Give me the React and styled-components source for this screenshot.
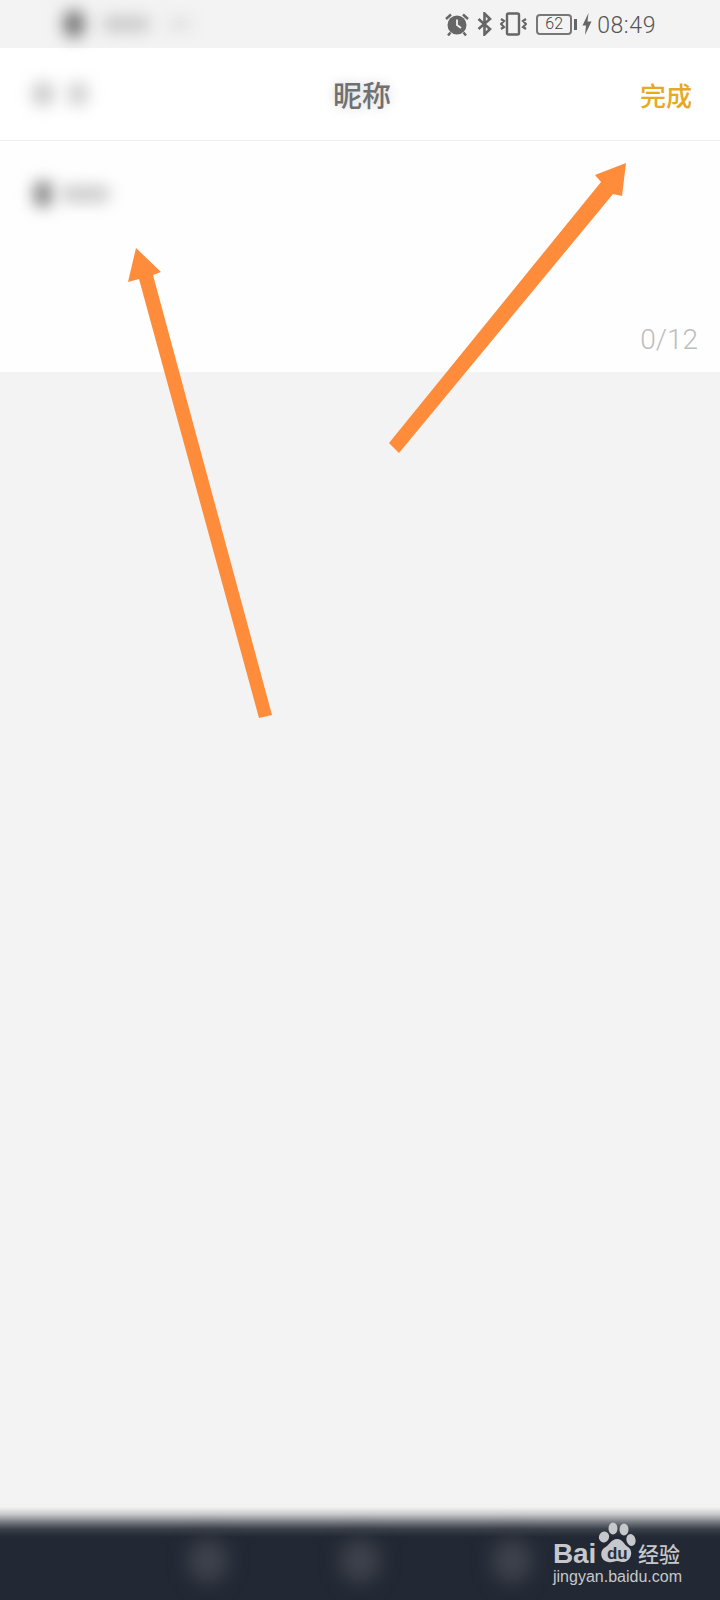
import React from 'react';
import styled, { createGlobalStyle } from 'styled-components';

const GlobalStyle = createGlobalStyle`
  html, body { margin: 0; padding: 0; background: #f3f3f3; }
  body { font-family: 'Noto Sans', 'Noto Sans CJK SC', sans-serif; }
`;

const Page = styled.div`
  position: relative;
  width: 720px;
  height: 1600px;
  display: flex;
  flex-direction: column;
  overflow: hidden;
  background: #f3f3f3;
`;

const StatusBar = styled.div`
  height: 48px;
  flex: none;
  display: flex;
  align-items: center;
  justify-content: space-between;
  padding: 0 64px 0 64px;
  box-sizing: border-box;
  color: #666;
`;

const StatusRight = styled.div`
  display: flex;
  align-items: center;
`;

const Time = styled.span`
  font-family: 'Roboto', sans-serif;
  font-size: 23px;
  line-height: 48px;
  font-weight: 300;
  letter-spacing: 0.6px;
  margin-left: 5px;
  padding-top: 3px;
  color: #555;
`;

const Battery = styled.div`
  width: 36px;
  height: 21px;
  margin: 0 2px 0 9px;
  box-sizing: border-box;
  border: 2px solid #777;
  border-radius: 4px;
  display: flex;
  align-items: center;
  justify-content: center;
  font-family: 'Roboto', sans-serif;
  font-size: 16px;
  font-weight: 300;
  line-height: 1;
  color: #444;
`;

const BatteryNub = styled.div`
  width: 3px;
  height: 11px;
  margin-right: 5px;
  background: #666;
`;

const Smudges = styled.div`
  display: flex;
  align-items: center;
  gap: ${p => p.$gap || 10}px;
`;

const Smudge = styled.div`
  width: ${p => p.$w}px;
  height: ${p => p.$h || 18}px;
  background: ${p => p.$color};
  border-radius: 8px;
  filter: blur(${p => p.$blur || 8}px);
`;

const Header = styled.div`
  height: 93px;
  flex: none;
  display: grid;
  grid-template-columns: 1fr auto 1fr;
  align-items: center;
  padding: 0 28px 0 32px;
  box-sizing: border-box;
  background: #fff;
  border-bottom: 1px solid #efefef;
`;

const Title = styled.h1`
  margin: 0;
  font-family: 'Noto Sans CJK SC', sans-serif;
  font-size: 29px;
  font-weight: 500;
  color: #707070;
  text-shadow: 0 0 12px rgba(0, 0, 0, 0.18);
`;

const DoneButton = styled.button`
  justify-self: end;
  border: 0;
  padding: 0;
  background: none;
  font-family: 'Noto Sans CJK SC', sans-serif;
  font-size: 26px;
  font-weight: 500;
  color: #e6a91f;
`;

const InputPanel = styled.div`
  height: 231px;
  flex: none;
  display: flex;
  flex-direction: column;
  justify-content: space-between;
  padding: 40px 22px 14px 34px;
  box-sizing: border-box;
  background: #fefefe;
`;

const Counter = styled.div`
  align-self: flex-end;
  font-family: 'Roboto', sans-serif;
  font-size: 28px;
  font-weight: 300;
  line-height: 36px;
  color: #bdbdbd;
`;

const Spacer = styled.div`
  flex: 1;
`;

const NavBar = styled.div`
  position: relative;
  height: 93px;
  flex: none;
  display: flex;
  justify-content: center;
  align-items: center;
  gap: 112px;
  padding: 14px 0 0;
  box-sizing: border-box;
  background: linear-gradient(#f3f3f3 0, #c9cacc 7px, #6f737a 16px, #3b404a 22px, #222834 30px);
`;

const NavGhost = styled.div`
  width: 40px;
  height: 44px;
  border-radius: 50%;
  background: #3f434c;
  filter: blur(10px);
`;

const Watermark = styled.div`
  position: absolute;
  left: 553px;
  top: 15px;
  width: 140px;
  color: #c6c8cb;
`;

const LogoRow = styled.div`
  display: flex;
  align-items: flex-end;
  height: 43px;
`;

const LogoWord = styled.span`
  font-family: 'Liberation Sans', sans-serif;
  font-size: 28px;
  font-weight: 700;
  line-height: 22px;
  letter-spacing: -0.2px;
`;

const PawBox = styled.div`
  position: relative;
  width: 38px;
  height: 43px;
  flex: none;
  margin-left: 2px;
`;

const PawText = styled.span`
  position: absolute;
  left: 9px;
  bottom: 3px;
  font-family: 'Liberation Sans', sans-serif;
  font-size: 17px;
  font-weight: 700;
  line-height: 17px;
  color: #2a303b;
`;

const LogoCn = styled.span`
  font-family: 'Noto Sans CJK SC', sans-serif;
  font-size: 21px;
  font-weight: 500;
  line-height: 24px;
  margin-left: 2px;
  white-space: nowrap;
`;

const Domain = styled.div`
  font-family: 'Liberation Sans', sans-serif;
  font-size: 16px;
  line-height: 18px;
  margin-top: 3px;
  white-space: nowrap;
`;

const Arrows = styled.svg`
  position: absolute;
  left: 0;
  top: 0;
  pointer-events: none;
`;

const Icon = styled.svg`
  display: block;
  flex: none;
  margin-left: ${p => p.$ml || 0}px;
`;

const AlarmIcon = () => (
  <Icon width="24" height="24" viewBox="0 0 24 24">
    <circle cx="12" cy="13" r="9.500" fill="#666" />
    <path d="M12 7.500V13l4 3" fill="none" stroke="#f3f3f3" strokeWidth="1.800" />
    <path d="M1 7 6 2.500M23 7 18 2.500M5.500 20.500l-2.500 3M18.500 20.500l2.500 3" stroke="#666" strokeWidth="2.400" fill="none" />
  </Icon>
);

const BluetoothIcon = () => (
  <Icon $ml={8} width="15" height="24" viewBox="0 0 15 24">
    <path d="M1.500 7 13 17 7.500 22.500V1.500L13 7 1.500 17" fill="none" stroke="#666" strokeWidth="2.600" />
  </Icon>
);

const VibrateIcon = () => (
  <Icon $ml={8} width="27" height="24" viewBox="0 0 27 24">
    <rect x="7" y="1.500" width="12" height="21" rx="1.500" fill="none" stroke="#666" strokeWidth="2.400" />
    <path d="M1 7 4 9 1 12l3 3-3 2M26 7l-3 2 3 3-3 3 3 2" fill="none" stroke="#666" strokeWidth="2.200" />
  </Icon>
);

const BoltIcon = () => (
  <Icon width="10" height="24" viewBox="0 0 10 24">
    <polygon points="6.500,1 0.500,13.500 4,13.500 3,23 9.500,9.500 5.500,9.500" fill="#666" />
  </Icon>
);

const BaiduPaw = () => (
  <svg width="38" height="43" viewBox="0 0 38 43">
    <ellipse cx="15" cy="6.500" rx="4.500" ry="6" fill="#c6c8cb" />
    <ellipse cx="26" cy="7.500" rx="4.500" ry="6" fill="#c6c8cb" />
    <ellipse cx="6" cy="15" rx="5" ry="5.500" fill="#c6c8cb" transform="rotate(30 6 15)" />
    <ellipse cx="33" cy="18" rx="4.500" ry="6" fill="#c6c8cb" transform="rotate(-15 33 18)" />
    <path d="M19 17c6 0 7 6 11 8 6 4 3 14-4 15-3 .500-4-1-7-1s-5 2-9 1c-7-1-9-10-4-14 5-2 7-9 13-9z" fill="#c6c8cb" />
  </svg>
);

const App = () => {
  return (
    <Page>
      <GlobalStyle />
      <StatusBar>
        <Smudges $gap={18}>
          <Smudge $w={20} $h={26} $color="#707070" />
          <Smudge $w={48} $h={14} $color="#c4c4c4" />
          <Smudge $w={24} $h={12} $color="#dedede" />
        </Smudges>
        <StatusRight>
          <AlarmIcon />
          <BluetoothIcon />
          <VibrateIcon />
          <Battery>62</Battery>
          <BatteryNub />
          <BoltIcon />
          <Time>08:49</Time>
        </StatusRight>
      </StatusBar>
      <Header>
        <Smudges $gap={14}>
          <Smudge $w={22} $h={24} $color="#cccccc" />
          <Smudge $w={20} $h={24} $color="#d0d0d0" />
        </Smudges>
        <Title>昵称</Title>
        <DoneButton>完成</DoneButton>
      </Header>
      <InputPanel>
        <Smudges $gap={8}>
          <Smudge $w={18} $h={26} $color="#808080" />
          <Smudge $w={50} $h={16} $color="#c8c8c8" />
        </Smudges>
        <Counter>0/12</Counter>
      </InputPanel>
      <Spacer />
      <NavBar>
        <NavGhost />
        <NavGhost />
        <NavGhost />
        <Watermark>
          <LogoRow>
            <LogoWord>Bai</LogoWord>
            <PawBox>
              <BaiduPaw />
              <PawText>du</PawText>
            </PawBox>
            <LogoCn>经验</LogoCn>
          </LogoRow>
          <Domain>jingyan.baidu.com</Domain>
        </Watermark>
      </NavBar>
      <Arrows width="720" height="1600" viewBox="0 0 720 1600">
        <polygon
          points="389,443 399,453 613,194 622,196 626,163 595,175 601,182"
          fill="#ff8c3a"
        />
        <polygon
          points="259,718 272,715 153,275 161,272 136,248 128,282 139,279"
          fill="#ff8c3a"
        />
      </Arrows>
    </Page>
  );
};

export default App;
